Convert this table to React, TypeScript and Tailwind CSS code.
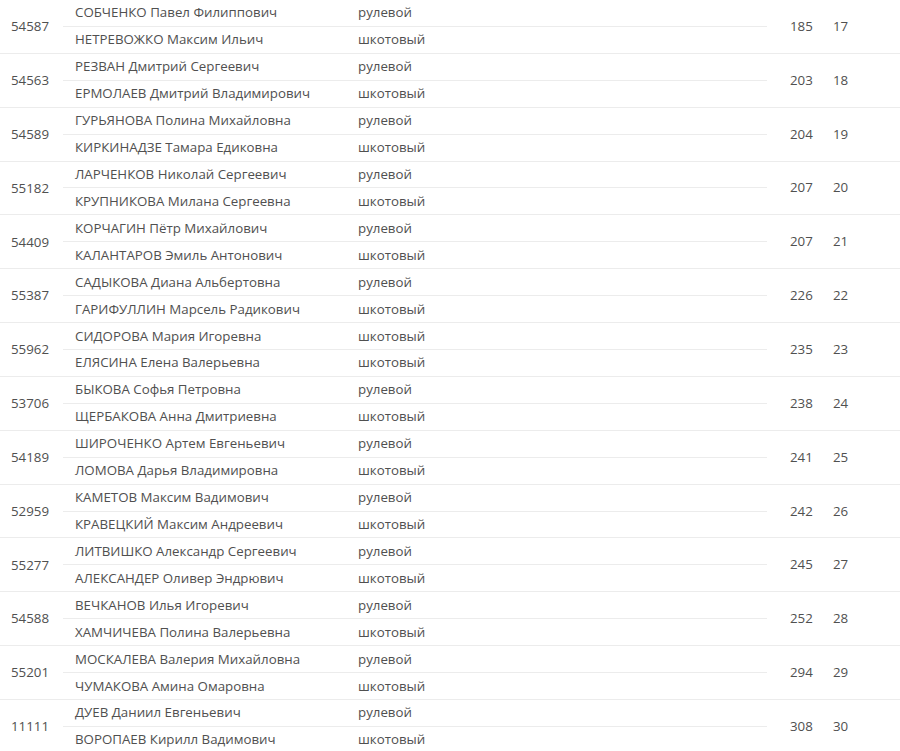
import React from "react";

const data: [string, string, string, string, string, string, string][] = [
  ["54587", "СОБЧЕНКО Павел Филиппович", "рулевой", "НЕТРЕВОЖКО Максим Ильич", "шкотовый", "185", "17"],
  ["54563", "РЕЗВАН Дмитрий Сергеевич", "рулевой", "ЕРМОЛАЕВ Дмитрий Владимирович", "шкотовый", "203", "18"],
  ["54589", "ГУРЬЯНОВА Полина Михайловна", "рулевой", "КИРКИНАДЗЕ Тамара Едиковна", "шкотовый", "204", "19"],
  ["55182", "ЛАРЧЕНКОВ Николай Сергеевич", "рулевой", "КРУПНИКОВА Милана Сергеевна", "шкотовый", "207", "20"],
  ["54409", "КОРЧАГИН Пётр Михайлович", "рулевой", "КАЛАНТАРОВ Эмиль Антонович", "шкотовый", "207", "21"],
  ["55387", "САДЫКОВА Диана Альбертовна", "рулевой", "ГАРИФУЛЛИН Марсель Радикович", "шкотовый", "226", "22"],
  ["55962", "СИДОРОВА Мария Игоревна", "шкотовый", "ЕЛЯСИНА Елена Валерьевна", "шкотовый", "235", "23"],
  ["53706", "БЫКОВА Софья Петровна", "рулевой", "ЩЕРБАКОВА Анна Дмитриевна", "шкотовый", "238", "24"],
  ["54189", "ШИРОЧЕНКО Артем Евгеньевич", "рулевой", "ЛОМОВА Дарья Владимировна", "шкотовый", "241", "25"],
  ["52959", "КАМЕТОВ Максим Вадимович", "рулевой", "КРАВЕЦКИЙ Максим Андреевич", "шкотовый", "242", "26"],
  ["55277", "ЛИТВИШКО Александр Сергеевич", "рулевой", "АЛЕКСАНДЕР Оливер Эндрювич", "шкотовый", "245", "27"],
  ["54588", "ВЕЧКАНОВ Илья Игоревич", "рулевой", "ХАМЧИЧЕВА Полина Валерьевна", "шкотовый", "252", "28"],
  ["55201", "МОСКАЛЕВА Валерия Михайловна", "рулевой", "ЧУМАКОВА Амина Омаровна", "шкотовый", "294", "29"],
  ["11111", "ДУЕВ Даниил Евгеньевич", "рулевой", "ВОРОПАЕВ Кирилл Вадимович", "шкотовый", "308", "30"],
];

export default function App() {
  return (
    <div
      className="w-[900px] bg-white text-[13.3px] text-[#505050] overflow-hidden h-[751px]"
      style={{ fontFamily: "'Open Sans', 'Noto Sans', sans-serif" }}
    >
      {data.map((d) => (
        <div key={d[0] + d[6]} className="flex h-[53.85px] border-b border-[#ececec]">
          <div className="w-[63px] flex items-center pl-[11px] pt-[1.5px]">{d[0]}</div>
          <div className="w-[704px] flex flex-col">
            <div className="flex flex-1 items-center border-b border-[#ececec] pt-px">
              <div className="w-[283px] pl-[12px] whitespace-nowrap">{d[1]}</div>
              <div className="pl-[12px] whitespace-nowrap">{d[2]}</div>
            </div>
            <div className="flex flex-1 items-center pt-px">
              <div className="w-[283px] pl-[12px] whitespace-nowrap">{d[3]}</div>
              <div className="pl-[12px] whitespace-nowrap">{d[4]}</div>
            </div>
          </div>
          <div className="w-[66px] flex items-center pl-[23px] pt-px">{d[5]}</div>
          <div className="flex items-center pt-px">{d[6]}</div>
        </div>
      ))}
    </div>
  );
}
